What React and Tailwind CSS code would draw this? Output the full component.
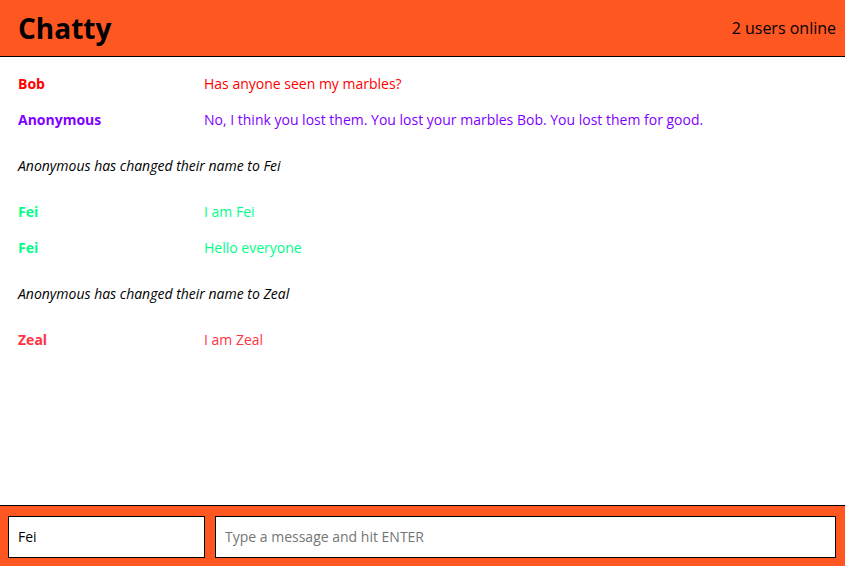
export default function App() {
  const rows = [
    { type: "msg", user: "Bob", text: "Has anyone seen my marbles?", color: "text-[#ff0000]" },
    { type: "msg", user: "Anonymous", text: "No, I think you lost them. You lost your marbles Bob. You lost them for good.", color: "text-[#7f00ff]" },
    { type: "sys", text: "Anonymous has changed their name to Fei" },
    { type: "msg", user: "Fei", text: "I am Fei", color: "text-[#00ff88]" },
    { type: "msg", user: "Fei", text: "Hello everyone", color: "text-[#00ff88]" },
    { type: "sys", text: "Anonymous has changed their name to Zeal" },
    { type: "msg", user: "Zeal", text: "I am Zeal", color: "text-[#ff3344]" },
  ];
  return (
    <div className="flex h-[566px] w-[845px] flex-col bg-white font-['Open_Sans',sans-serif] text-black">
      <header className="flex h-[57px] shrink-0 items-center justify-between border-b border-black bg-[#ff5722] pl-[18px] pr-[9px]">
        <h1 className="text-[28px] font-bold leading-none">Chatty</h1>
        <span className="text-[16px]">2 users online</span>
      </header>
      <main className="flex-1 pt-[8px]">
        {rows.map((r, i) =>
          r.type === "msg" ? (
            <div key={i} className={`flex h-[36.3px] items-center text-[14px] ${r.color}`}>
              <span className="w-[204px] shrink-0 pl-[18px] font-bold">{r.user}</span>
              <span>{r.text}</span>
            </div>
          ) : (
            <div key={i} className="flex h-[55.5px] items-center pl-[18px] text-[14px] italic">
              {r.text}
            </div>
          )
        )}
      </main>
      <footer className="flex h-[61px] shrink-0 gap-[10px] border-t border-black bg-[#ff5722] pl-[8px] pr-[9px] pt-[10px]">
        <input
          className="h-[42px] w-[197px] border border-black bg-white px-[9px] pb-[2px] text-[14px] text-black outline-none"
          defaultValue="Fei"
        />
        <input
          className="h-[42px] flex-1 border border-black bg-white px-[9px] pb-[2px] text-[14px] text-black outline-none placeholder:text-[#757575]"
          placeholder="Type a message and hit ENTER"
        />
      </footer>
    </div>
  );
}
